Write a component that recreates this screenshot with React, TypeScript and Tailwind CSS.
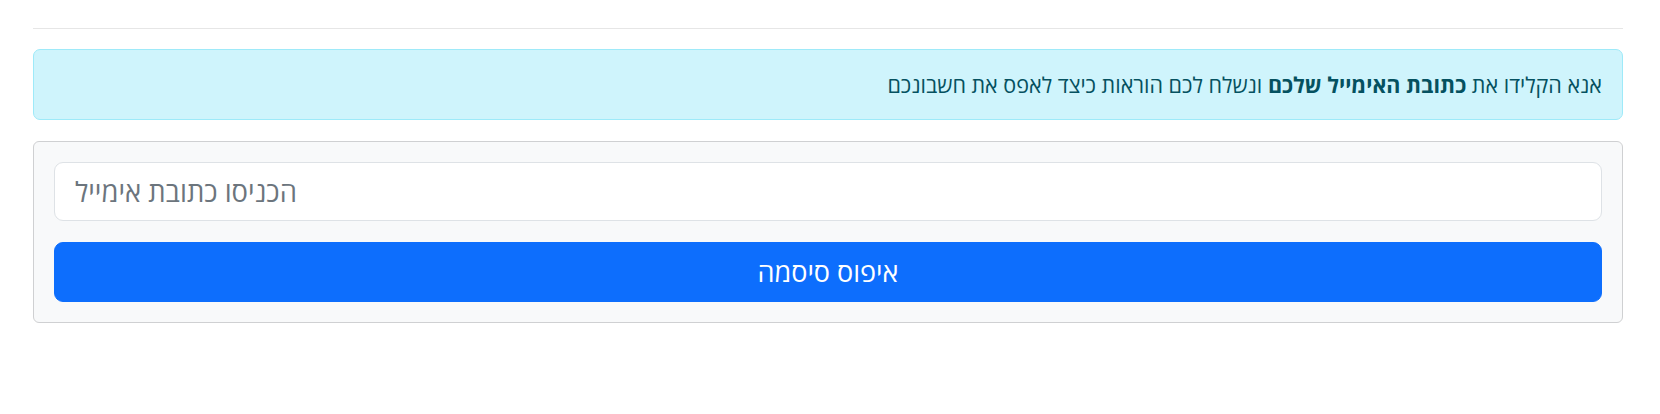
import React, { useState } from 'react';

export default function App() {
  const [email, setEmail] = useState('');

  return (
    <div className="min-h-screen bg-white px-[33px] pt-[28px]" style={{ fontFamily: '"Open Sans", "Liberation Sans", sans-serif' }}>
      <div className="w-[1590px]">
        <hr className="border-0 border-t border-[#e6e6e6] m-0" />

        <div
          dir="rtl"
          className="mt-[20px] rounded-[7px] border border-[#9eeaf9] bg-[#cff4fc] px-[20px] py-[20px] text-[21.5px] leading-[29px] text-[#055160]"
        >
          אנא הקלידו את <strong className="font-bold">כתובת האימייל שלכם</strong> ונשלח לכם הוראות כיצד לאפס את חשבונכם
        </div>

        <form
          onSubmit={(e) => e.preventDefault()}
          className="mt-[21px] flex flex-col gap-[21px] rounded-[6px] border border-[#cfd0d2] bg-[#f8f9fa] p-[20px]"
        >
          <input
            type="email"
            value={email}
            onChange={(e) => setEmail(e.target.value)}
            placeholder="הכניסו כתובת אימייל"
            className="h-[59px] w-full rounded-[9px] border border-[#dee2e6] bg-white px-[20px] text-left text-[27.4px] text-[#212529] placeholder:text-[#6c757d] outline-none"
          />
          <button
            type="submit"
            className="h-[60px] w-full rounded-[9px] border border-[#0d6efd] bg-[#0d6efd] text-[27px] text-white"
          >
            איפוס סיסמה
          </button>
        </form>
      </div>
    </div>
  );
}
